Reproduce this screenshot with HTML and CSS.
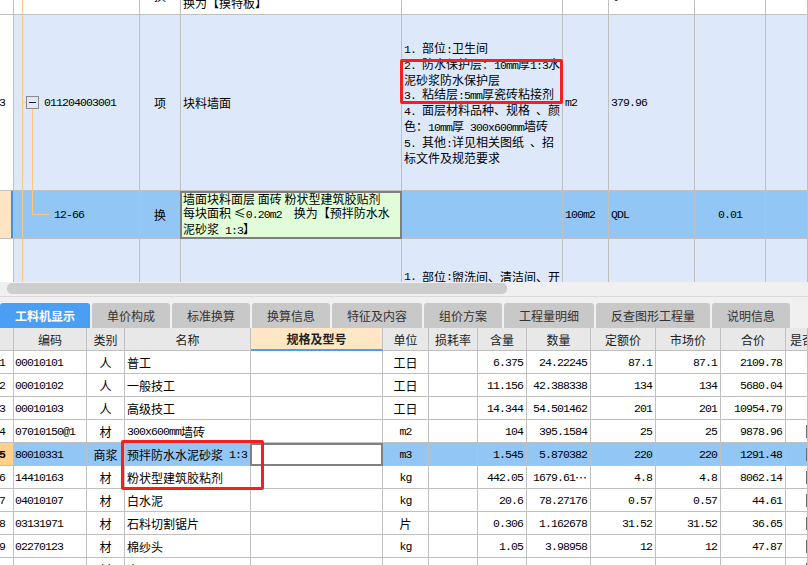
FILE: index.html
```html
<!DOCTYPE html>
<html lang="zh-CN">
<head>
<meta charset="utf-8">
<title>工料机显示</title>
<link rel="stylesheet" href="styles.css">
</head>
<body>
<div class="app">
  <div class="upper">
    <div class="urow r-top">
      <div class="uc rn"></div>
      <div class="uc code"><span class="n">12-167</span></div>
      <div class="uc c">换</div>
      <div class="uc name">墙面块料面层 面砖 粉状型建筑胶贴剂<br>换为【摸特板】</div>
      <div class="uc desc"></div>
      <div class="uc unit"><span class="n">100m2</span></div>
      <div class="uc qty"><span class="n">QDL</span></div>
      <div class="uc c"><span class="n">0.01</span></div>
      <div class="uc"></div>
    </div>
    <div class="urow r-item">
      <div class="uc rn"><span class="n">3</span></div>
      <div class="uc code"><span class="tb"></span><span class="n">011204003001</span></div>
      <div class="uc c">项</div>
      <div class="uc name">块料墙面</div>
      <div class="uc desc"><div>
        <span class="n">1. </span>部位<span class="n">:</span>卫生间<br>
        <span class="n">2. </span>防水保护层：<span class="n">10mm</span>厚<span class="n">1:3</span>水<br>
        泥砂浆防水保护层<br>
        <span class="n">3. </span>粘结层<span class="n">:5mm</span>厚瓷砖粘接剂<br>
        <span class="n">4. </span>面层材料品种、规格<span class="n"> </span>、颜<br>
        色：<span class="n">10mm</span>厚<span class="n"> 300x600mm</span>墙砖<br>
        <span class="n">5. </span>其他<span class="n">:</span>详见相关图纸<span class="n"> </span>、招<br>
        标文件及规范要求
      </div></div>
      <div class="uc unit"><span class="n">m2</span></div>
      <div class="uc qty"><span class="n">379.96</span></div>
      <div class="uc c"></div>
      <div class="uc"></div>
    </div>
    <div class="urow r-sel">
      <div class="uc rn"></div>
      <div class="uc code"><span class="n">12-66</span></div>
      <div class="uc c">换</div>
      <div class="uc name edit"><div>墙面块料面层 面砖 粉状型建筑胶贴剂<br>每块面积 ≤<span class="n">0.20m2  </span>换为【预拌防水水<br>泥砂浆<span class="n"> 1:3</span>】</div></div>
      <div class="uc desc"></div>
      <div class="uc unit"><span class="n">100m2</span></div>
      <div class="uc qty"><span class="n">QDL</span></div>
      <div class="uc c"><span class="n">0.01</span></div>
      <div class="uc"></div>
    </div>
    <div class="urow r-next">
      <div class="uc rn"></div>
      <div class="uc code"></div>
      <div class="uc c"></div>
      <div class="uc name"></div>
      <div class="uc desc"><span class="n">1. </span>部位<span class="n">:</span>盥洗间、清洁间、开</div>
      <div class="uc unit"></div>
      <div class="uc qty"></div>
      <div class="uc c"></div>
      <div class="uc"></div>
    </div>
  </div>

  <div class="hscroll"><div class="thumb"></div></div>

  <div class="tabs">
    <div class="tab w90 active">工料机显示</div>
    <div class="tab w78">单价构成</div>
    <div class="tab w78">标准换算</div>
    <div class="tab w78">换算信息</div>
    <div class="tab w90">特征及内容</div>
    <div class="tab w78">组价方案</div>
    <div class="tab w90">工程量明细</div>
    <div class="tab w114">反查图形工程量</div>
    <div class="tab w78">说明信息</div>
  </div>

  <div class="lower">
    <div class="lrow lhead">
      <div class="lc"></div>
      <div class="lc">编码</div>
      <div class="lc">类别</div>
      <div class="lc">名称</div>
      <div class="lc spec">规格及型号</div>
      <div class="lc">单位</div>
      <div class="lc">损耗率</div>
      <div class="lc">含量</div>
      <div class="lc">数量</div>
      <div class="lc">定额价</div>
      <div class="lc">市场价</div>
      <div class="lc">合价</div>
      <div class="lc last">是否</div>
    </div>
    <div class="lrow">
      <div class="lc rn"><span class="n">1</span></div>
      <div class="lc code"><span class="n">00010101</span></div>
      <div class="lc c">人</div>
      <div class="lc nm">普工</div>
      <div class="lc"></div>
      <div class="lc c">工日</div>
      <div class="lc"></div>
      <div class="lc r"><span class="n">6.375</span></div>
      <div class="lc r"><span class="n">24.22245</span></div>
      <div class="lc r"><span class="n">87.1</span></div>
      <div class="lc r"><span class="n">87.1</span></div>
      <div class="lc r"><span class="n">2109.78</span></div>
      <div class="lc"></div>
    </div>
    <div class="lrow">
      <div class="lc rn"><span class="n">2</span></div>
      <div class="lc code"><span class="n">00010102</span></div>
      <div class="lc c">人</div>
      <div class="lc nm">一般技工</div>
      <div class="lc"></div>
      <div class="lc c">工日</div>
      <div class="lc"></div>
      <div class="lc r"><span class="n">11.156</span></div>
      <div class="lc r"><span class="n">42.388338</span></div>
      <div class="lc r"><span class="n">134</span></div>
      <div class="lc r"><span class="n">134</span></div>
      <div class="lc r"><span class="n">5680.04</span></div>
      <div class="lc"></div>
    </div>
    <div class="lrow">
      <div class="lc rn"><span class="n">3</span></div>
      <div class="lc code"><span class="n">00010103</span></div>
      <div class="lc c">人</div>
      <div class="lc nm">高级技工</div>
      <div class="lc"></div>
      <div class="lc c">工日</div>
      <div class="lc"></div>
      <div class="lc r"><span class="n">14.344</span></div>
      <div class="lc r"><span class="n">54.501462</span></div>
      <div class="lc r"><span class="n">201</span></div>
      <div class="lc r"><span class="n">201</span></div>
      <div class="lc r"><span class="n">10954.79</span></div>
      <div class="lc"></div>
    </div>
    <div class="lrow">
      <div class="lc rn"><span class="n">4</span></div>
      <div class="lc code"><span class="n">07010150@1</span></div>
      <div class="lc c">材</div>
      <div class="lc nm"><span class="n">300x600mm</span>墙砖</div>
      <div class="lc"></div>
      <div class="lc c"><span class="n">m2</span></div>
      <div class="lc"></div>
      <div class="lc r"><span class="n">104</span></div>
      <div class="lc r"><span class="n">395.1584</span></div>
      <div class="lc r"><span class="n">25</span></div>
      <div class="lc r"><span class="n">25</span></div>
      <div class="lc r"><span class="n">9878.96</span></div>
      <div class="lc"><span class="chk"></span></div>
    </div>
    <div class="lrow sel">
      <div class="lc rn"><span class="n">5</span></div>
      <div class="lc code"><span class="n">80010331</span></div>
      <div class="lc c">商浆</div>
      <div class="lc nm">预拌防水水泥砂浆<span class="n"> 1:3</span></div>
      <div class="lc edit"></div>
      <div class="lc c"><span class="n">m3</span></div>
      <div class="lc"></div>
      <div class="lc r"><span class="n">1.545</span></div>
      <div class="lc r"><span class="n">5.870382</span></div>
      <div class="lc r"><span class="n">220</span></div>
      <div class="lc r"><span class="n">220</span></div>
      <div class="lc r"><span class="n">1291.48</span></div>
      <div class="lc"><span class="chk"></span></div>
    </div>
    <div class="lrow">
      <div class="lc rn"><span class="n">6</span></div>
      <div class="lc code"><span class="n">14410163</span></div>
      <div class="lc c">材</div>
      <div class="lc nm">粉状型建筑胶粘剂</div>
      <div class="lc"></div>
      <div class="lc c"><span class="n">kg</span></div>
      <div class="lc"></div>
      <div class="lc r"><span class="n">442.05</span></div>
      <div class="lc r"><span class="n">1679.61</span>…</div>
      <div class="lc r"><span class="n">4.8</span></div>
      <div class="lc r"><span class="n">4.8</span></div>
      <div class="lc r"><span class="n">8062.14</span></div>
      <div class="lc"><span class="chk"></span></div>
    </div>
    <div class="lrow">
      <div class="lc rn"><span class="n">7</span></div>
      <div class="lc code"><span class="n">04010107</span></div>
      <div class="lc c">材</div>
      <div class="lc nm">白水泥</div>
      <div class="lc"></div>
      <div class="lc c"><span class="n">kg</span></div>
      <div class="lc"></div>
      <div class="lc r"><span class="n">20.6</span></div>
      <div class="lc r"><span class="n">78.27176</span></div>
      <div class="lc r"><span class="n">0.57</span></div>
      <div class="lc r"><span class="n">0.57</span></div>
      <div class="lc r"><span class="n">44.61</span></div>
      <div class="lc"><span class="chk"></span></div>
    </div>
    <div class="lrow">
      <div class="lc rn"><span class="n">8</span></div>
      <div class="lc code"><span class="n">03131971</span></div>
      <div class="lc c">材</div>
      <div class="lc nm">石料切割锯片</div>
      <div class="lc"></div>
      <div class="lc c">片</div>
      <div class="lc"></div>
      <div class="lc r"><span class="n">0.306</span></div>
      <div class="lc r"><span class="n">1.162678</span></div>
      <div class="lc r"><span class="n">31.52</span></div>
      <div class="lc r"><span class="n">31.52</span></div>
      <div class="lc r"><span class="n">36.65</span></div>
      <div class="lc"><span class="chk"></span></div>
    </div>
    <div class="lrow">
      <div class="lc rn"><span class="n">9</span></div>
      <div class="lc code"><span class="n">02270123</span></div>
      <div class="lc c">材</div>
      <div class="lc nm">棉纱头</div>
      <div class="lc"></div>
      <div class="lc c"><span class="n">kg</span></div>
      <div class="lc"></div>
      <div class="lc r"><span class="n">1.05</span></div>
      <div class="lc r"><span class="n">3.98958</span></div>
      <div class="lc r"><span class="n">12</span></div>
      <div class="lc r"><span class="n">12</span></div>
      <div class="lc r"><span class="n">47.87</span></div>
      <div class="lc"><span class="chk"></span></div>
    </div>
    <div class="lrow">
      <div class="lc rn"><span class="n">10</span></div>
      <div class="lc code"><span class="n">34110117</span></div>
      <div class="lc c">材</div>
      <div class="lc nm">水</div>
      <div class="lc"></div>
      <div class="lc c"><span class="n">m3</span></div>
      <div class="lc"></div>
      <div class="lc r"><span class="n">0.9</span></div>
      <div class="lc r"><span class="n">3.41964</span></div>
      <div class="lc r"><span class="n">5.13</span></div>
      <div class="lc r"><span class="n">5.13</span></div>
      <div class="lc r"><span class="n">17.54</span></div>
      <div class="lc"><span class="chk"></span></div>
    </div>
  </div>

  <div class="mark mark1"></div>
  <div class="mark mark2"></div>
</div>
</body>
</html>
```
FILE: styles.css
```css
* { box-sizing: border-box; }

body {
  margin: 0;
  background: #f0f0f0;
  font-family: "Noto Sans CJK SC", sans-serif;
  font-size: 12px;
  color: #000;
}

.app {
  position: relative;
  width: 808px;
  height: 565px;
  overflow: hidden;
}

.n {
  font-family: "Liberation Mono", "Noto Sans CJK SC", monospace;
  font-size: 11.5px;
  letter-spacing: -0.9px;
  white-space: pre;
}

/* ---------- upper grid ---------- */
.upper {
  height: 282px;
  overflow: hidden;
  background: #fff;
}

.urow {
  display: grid;
  grid-template-columns: 14px 126px 41px 221px 161px 46px 86px 71px 1fr;
}

.uc {
  border-right: 1px solid #c0c0c0;
  border-bottom: 1px solid #c0c0c0;
  display: flex;
  align-items: center;
  white-space: nowrap;
  overflow: hidden;
  line-height: 14px;
  min-width: 0;
}

.uc.c { justify-content: center; }
.uc.name { padding-left: 2px; }
.uc.desc { padding-left: 2px; }
.uc.unit { padding-left: 2px; }
.uc.qty { padding-left: 2px; }
.uc.rn { background: #fff; padding-left: 0; text-indent: -1px; }

.r-top { height: 37px; margin-top: -22px; background: #fff; }
.r-item { height: 176px; background: #dde9fb; }
.r-sel { height: 48px; background: #92c6f4; }
.r-next { height: 80px; background: #dde9fb; }

.r-sel .uc.rn {
  background: #ffe4c4;
  box-shadow: inset -2px 0 0 #3d8fe8;
}

.r-next .uc { align-items: flex-start; }
.r-next .uc.desc { padding-top: 31px; }

.r-top .code,
.r-next .code {
  background: linear-gradient(#ffc878, #ffc878) 8px 0 / 1px 100% no-repeat;
}
.r-top .code { padding-left: 40px; }

.r-item .code {
  padding-left: 12px;
  background:
    linear-gradient(#ffc878, #ffc878) 8px 0 / 1px 100% no-repeat,
    linear-gradient(#ffc878, #ffc878) 8px 87px / 4px 1px no-repeat,
    linear-gradient(#ffc878, #ffc878) 18px 94px / 1px 100% no-repeat;
}

.r-sel .code {
  padding-left: 40px;
  background:
    linear-gradient(#ffc878, #ffc878) 8px 0 / 1px 100% no-repeat,
    linear-gradient(#ffc878, #ffc878) 18px 0 / 1px 24px no-repeat,
    linear-gradient(#ffc878, #ffc878) 18px 23px / 17px 1px no-repeat;
}

.tb {
  width: 13px;
  height: 13px;
  border: 1px solid #8a8a8a;
  margin-right: 5px;
  flex: none;
  display: flex;
  align-items: center;
  justify-content: center;
}
.tb::after {
  content: "";
  width: 7px;
  height: 1px;
  background: #222;
}

.uc.edit {
  margin-left: -1px;
  border: 2px solid #7f7f7f;
  background: #e1fcd8;
  padding-left: 1px;
}

/* ---------- scrollbar ---------- */
.hscroll {
  height: 15px;
  background: #f0f0f0;
  padding: 1px 0 0 7px;
  border-bottom: 1px solid #dadada;
}
.thumb {
  width: 500px;
  height: 11px;
  border-radius: 5px;
  background: #cdcdcd;
}

/* ---------- tabs ---------- */
.tabs {
  height: 31px;
  display: flex;
  align-items: flex-end;
  gap: 2px;
  background: #f0f0f0;
}
.tab {
  height: 25px;
  background: #c8c8c8;
  border-radius: 3px 3px 0 0;
  display: flex;
  align-items: center;
  justify-content: center;
  color: #333;
  font-size: 12px;
  flex: none;
}
.tab.active {
  background: #4a9ef4;
  color: #fff;
  font-weight: bold;
}
.w78 { width: 78px; }
.w90 { width: 90px; }
.w114 { width: 114px; }

/* ---------- lower grid ---------- */
.lower { background: #fff; }

.lrow {
  display: grid;
  grid-template-columns: 14px 73px 38px 126px 132px 46px 49px 49px 64px 65px 65px 65px 1fr;
  height: 23px;
}

.lc {
  border-right: 1px solid #c0c0c0;
  border-bottom: 1px solid #c0c0c0;
  display: flex;
  align-items: center;
  white-space: nowrap;
  overflow: hidden;
  padding: 0 3px;
  min-width: 0;
}
.lc.c { justify-content: center; }
.lc.r { justify-content: flex-end; }
.lc.code { padding-left: 1px; }
.lc.nm { padding-left: 2px; }
.lc.rn { padding: 0; text-indent: -1px; }

.lhead .lc {
  background: #e8e8e8;
  justify-content: center;
  color: #222;
}
.lhead .lc.spec {
  background: #ffe6c4;
  font-weight: bold;
  border-bottom: 2px solid #4a9ef4;
}
.lhead .lc.last { justify-content: flex-start; padding-left: 4px; }

.lrow.sel { background: #92c6f4; }
.lrow.sel .lc.rn {
  background: #ffd08c;
  font-weight: bold;
}
.lc.edit {
  margin-left: -1px;
  border: 2px solid #808080;
  background: #fff;
}

.chk {
  width: 13px;
  height: 13px;
  border: 1px solid #6d6d6d;
  background: #fff;
  margin-left: 17px;
  flex: none;
}

/* ---------- annotation marks ---------- */
.mark {
  position: absolute;
  border: 3px solid #f42020;
  border-radius: 2px;
}
.mark1 { left: 400px; top: 59px; width: 163px; height: 45px; }
.mark2 { left: 121px; top: 440px; width: 143px; height: 50px; }
```
